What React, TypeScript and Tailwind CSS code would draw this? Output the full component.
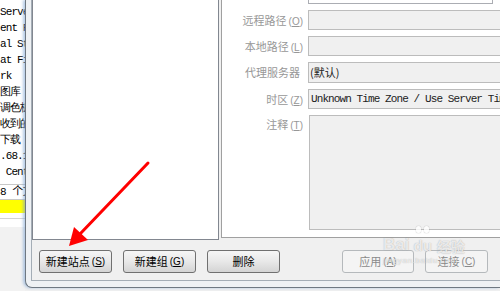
import React from "react";

const cjk = "font-['Noto_Sans_CJK_SC',sans-serif]";
const mono = "font-['Liberation_Mono',monospace] text-[11px] tracking-[-0.9px]";

const behindLines = ["Serve", "ent F", "al St", "at Fi", "rk", "图库", "调色板", "收到的", "下载", ".68.1", " Cent"];

function Acc({ k }: { k: string }) {
    return (
        <span className="ml-[2px] text-[10px] font-['Liberation_Sans',sans-serif]">
            (<span className="underline">{k}</span>)
        </span>
    );
}

function Label({ text, acc, className = "" }: { text: string; acc?: string; className?: string }) {
    return (
        <div className={`w-[82px] shrink-0 pr-[1px] text-right text-[11px] text-[#979797] whitespace-nowrap ${cjk} ${className}`}>
            {text}
            {acc && <Acc k={acc} />}
        </div>
    );
}

function WinButton({ text, acc, w, disabled }: { text: string; acc?: string; w: string; disabled?: boolean }) {
    return (
        <div
            className={`${w} shrink-0 h-[23px] flex items-center justify-center rounded-[3px] border text-[11px] whitespace-nowrap ${cjk} ${
                disabled
                    ? "border-[#b5b9bc] bg-[#f4f4f4] text-[#8a8a8a]"
                    : "border-[#707070] bg-linear-to-b from-[#f6f6f6] via-[#e8e8e8] to-[#d4d4d4] text-black"
            }`}
        >
            {text}
            {acc && <Acc k={acc} />}
        </div>
    );
}

export default function App() {
    return (
        <div className="relative w-[500px] h-[291px] overflow-hidden bg-[#f0f0f0] flex">
            {/* window behind the dialog */}
            <div className="w-[25px] shrink-0 flex flex-col bg-white overflow-hidden">
                <div className={`pt-[4px] ${mono} ${cjk} text-black`}>
                    {behindLines.map((l, i) => (
                        <div key={i} className={`h-[16px] leading-[16px] whitespace-pre ${mono}`}>
                            {l}
                        </div>
                    ))}
                </div>
                <div className="mt-[4px] border-t border-[#c8c8c8] h-[16px] border-b leading-[14px] text-[11px] whitespace-nowrap font-['Liberation_Mono','Noto_Sans_CJK_SC',monospace] tracking-[-0.5px]">
                    8 个文
                </div>
                <div className="h-[13px] bg-[#ffff00]" />
                <div className="h-[6px] bg-white border-b border-[#d4d4d4]" />
                <div className="h-[8px] bg-white" />
                <div className="flex-1 bg-[#f2f2f2]" />
            </div>

            {/* dialog frame */}
            <div className="w-[475px] h-[288px] shrink-0 border-l border-b border-[#6e7882] rounded-bl-[7px] bg-[#eef1f4] pl-[5px] pb-[6px] shadow-[-2px_0_3px_rgba(120,160,210,0.55)]">
                <div className="h-full flex flex-col border-l border-b border-[#a4adb6] bg-[#f0f0f0]">
                    <div className="flex items-start h-[240px]">
                        {/* site tree */}
                        <div className="w-[187px] shrink-0 h-[240px] bg-white border-l border-r border-b border-[#828790]" />
                        {/* settings page */}
                        <div className="ml-[2px] flex-1 min-w-0 h-[238px] overflow-hidden bg-white border-l border-b border-[#a0a0a0] flex flex-col">
                            <div className="flex gap-[4px]">
                                <div className="w-[82px] shrink-0" />
                                <div className="w-[185px] shrink-0 h-[4px] bg-white border border-t-0 border-[#abadb3]" />
                            </div>
                            <div className="mt-[6px] flex items-center gap-[4px]">
                                <Label text="远程路径" acc="O" />
                                <div className="flex-1 min-w-0 h-[20px] bg-[#f0f0f0] border border-r-0 border-[#bcbcbc]" />
                            </div>
                            <div className="mt-[6px] flex items-center gap-[4px]">
                                <Label text="本地路径" acc="L" />
                                <div className="flex-1 min-w-0 h-[20px] bg-[#f0f0f0] border border-r-0 border-[#bcbcbc]" />
                            </div>
                            <div className="mt-[6px] flex items-center gap-[4px]">
                                <Label text="代理服务器" className="pr-[4px]" />
                                <div className={`flex-1 min-w-0 h-[21px] flex items-center pl-[1px] bg-[#f0f0f0] border border-r-0 border-[#bcbcbc] text-[11px] text-[#222] ${cjk}`}>
                                    (默认)
                                </div>
                            </div>
                            <div className="mt-[6px] flex items-center gap-[4px]">
                                <Label text="时区" acc="Z" />
                                <div className={`flex-1 min-w-0 h-[20px] flex items-center pl-[2px] overflow-hidden whitespace-nowrap bg-[#f0f0f0] border border-r-0 border-[#bcbcbc] text-[#222] ${mono}`}>
                                    Unknown Time Zone / Use Server Time
                                </div>
                            </div>
                            <div className="mt-[6px] flex items-start gap-[4px]">
                                <Label text="注释" acc="T" className="pt-[1px]" />
                                <div className="ml-[1px] flex-1 min-w-0 h-[115px] bg-[#f0f0f0] border border-r-0 border-[#bcbcbc]" />
                            </div>
                        </div>
                    </div>

                    {/* button row */}
                    <div className="mt-[10px] flex justify-between pl-[7px] pr-[12px]">
                        <div className="flex gap-[11px]">
                            <WinButton text="新建站点" acc="S" w="w-[73px]" />
                            <WinButton text="新建组" acc="G" w="w-[73px]" />
                            <WinButton text="删除" w="w-[73px]" />
                        </div>
                        <div className="flex gap-[11px]">
                            <WinButton text="应用" acc="A" w="w-[72px]" disabled />
                            <WinButton text="连接" acc="C" w="w-[63px]" disabled />
                        </div>
                    </div>
                </div>
            </div>

            {/* red annotation arrow */}
            <svg className="absolute left-0 top-0 pointer-events-none" width="500" height="291" viewBox="0 0 500 291">
                <line x1="148" y1="163" x2="80" y2="234" stroke="#ff0000" strokeWidth="3" strokeLinecap="round" />
                <polygon points="69,246 74,227 88,240" fill="#ff0000" />
            </svg>

            {/* watermark */}
            <div className="absolute left-[383px] top-[236px] pointer-events-none select-none text-white/75 [text-shadow:0_0_1px_rgba(110,110,110,0.6)]">
                <div className="flex items-end leading-none">
                    <span className="font-['Liberation_Sans',sans-serif] text-[17px] font-bold">Bai</span>
                    <span className="relative ml-[4px] font-['Liberation_Sans',sans-serif] text-[15px] font-bold">
                        du
                        <span className="absolute left-[3px] -top-[12px] flex gap-[3px]">
                            <span className="w-[5px] h-[7px] rounded-full bg-white/80 shadow-[0_0_1px_rgba(110,110,110,0.8)]" />
                            <span className="w-[5px] h-[7px] rounded-full bg-white/80 shadow-[0_0_1px_rgba(110,110,110,0.8)]" />
                        </span>
                    </span>
                    <span className={`ml-[5px] text-[14px] font-bold ${cjk}`}>经验</span>
                </div>
                <div className="mt-[4px] font-['Liberation_Sans',sans-serif] text-[8px] leading-none tracking-[0.6px]">jingyan.baidu.com</div>
            </div>
        </div>
    );
}
